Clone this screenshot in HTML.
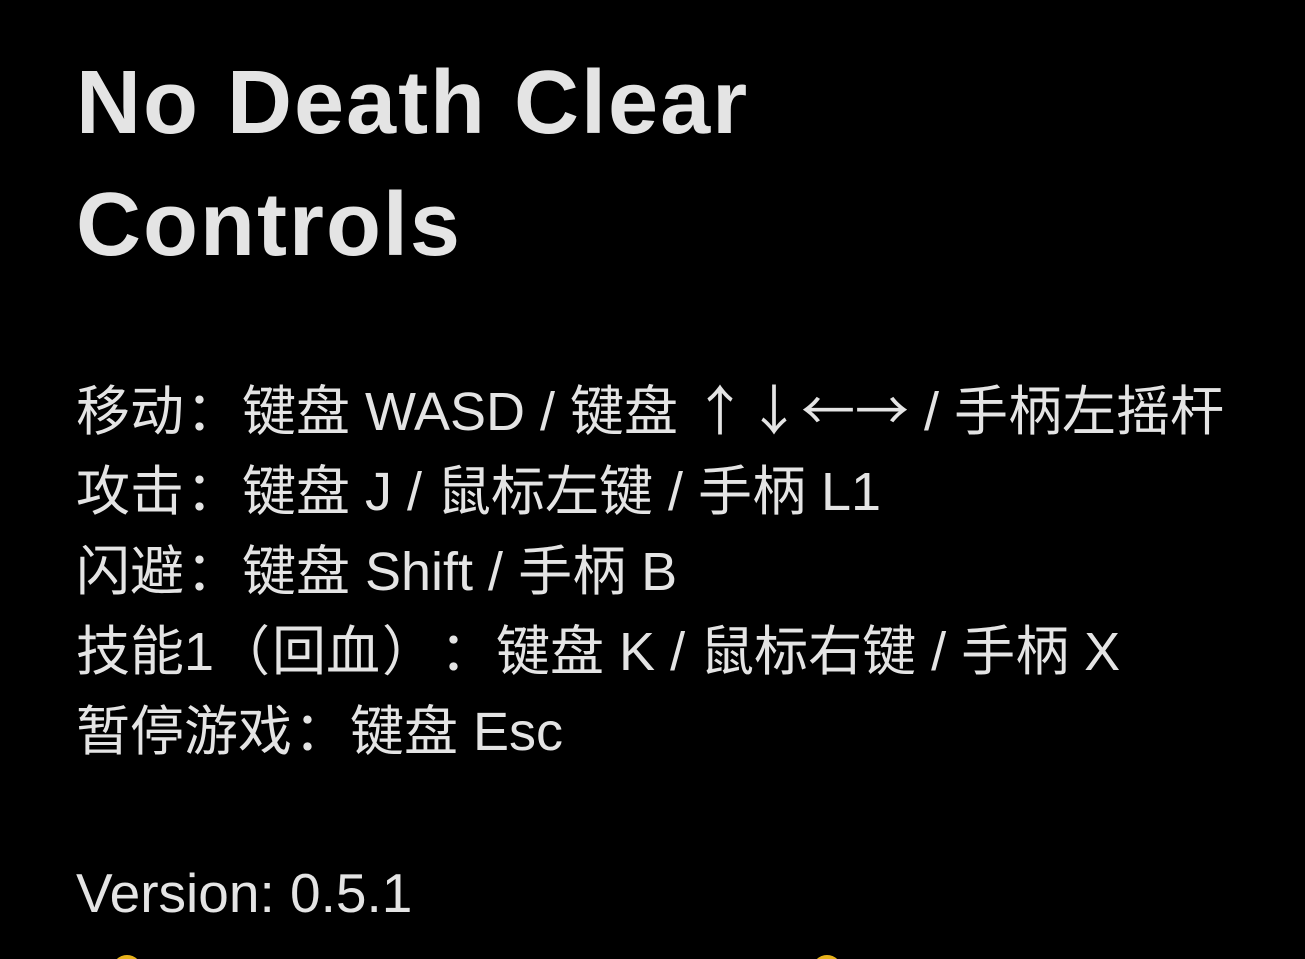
<!DOCTYPE html>
<html><head><meta charset="utf-8"><style>
html,body{margin:0;padding:0;background:#000;width:1305px;height:959px;overflow:hidden}
body{position:relative;color:#e4e4e4;font-family:"Liberation Sans","Noto Sans CJK SC",sans-serif}
.t{position:absolute;left:76px;font-weight:bold;font-size:90px;line-height:122px;white-space:nowrap;letter-spacing:2px}
.l{position:absolute;left:76px;font-size:54px;white-space:nowrap;line-height:80px;height:80px}
.c{font-family:"Noto Sans CJK SC",sans-serif;line-height:0}
.p{display:inline-block;width:58px;text-align:center;font-family:"Noto Sans CJK SC",sans-serif;line-height:0}
.dot{position:absolute;width:30px;height:30px;border-radius:50%;background:#e8b21a}
</style></head><body>
<div class="t" style="top:42px">No Death Clear<br>Controls</div>
<div class="l" style="top:372px">移动<span class="p">：</span>键盘 WASD / 键盘 <span class="c">↑↓←→</span> / 手柄左摇杆</div>
<div class="l" style="top:452px">攻击<span class="p">：</span>键盘 J / 鼠标左键 / 手柄 L1</div>
<div class="l" style="top:532px">闪避<span class="p">：</span>键盘 Shift / 手柄 B</div>
<div class="l" style="top:612px">技能1<span class="p">（</span>回血<span class="p">）</span><span class="p">：</span>键盘 K / 鼠标右键 / 手柄 X</div>
<div class="l" style="top:692px">暂停游戏<span class="p">：</span>键盘 Esc</div>
<div class="l" style="top:853px;font-size:55px">Version: 0.5.1</div>
<div class="dot" style="left:112px;top:955px"></div>
<div class="dot" style="left:812px;top:955px"></div>
</body></html>
